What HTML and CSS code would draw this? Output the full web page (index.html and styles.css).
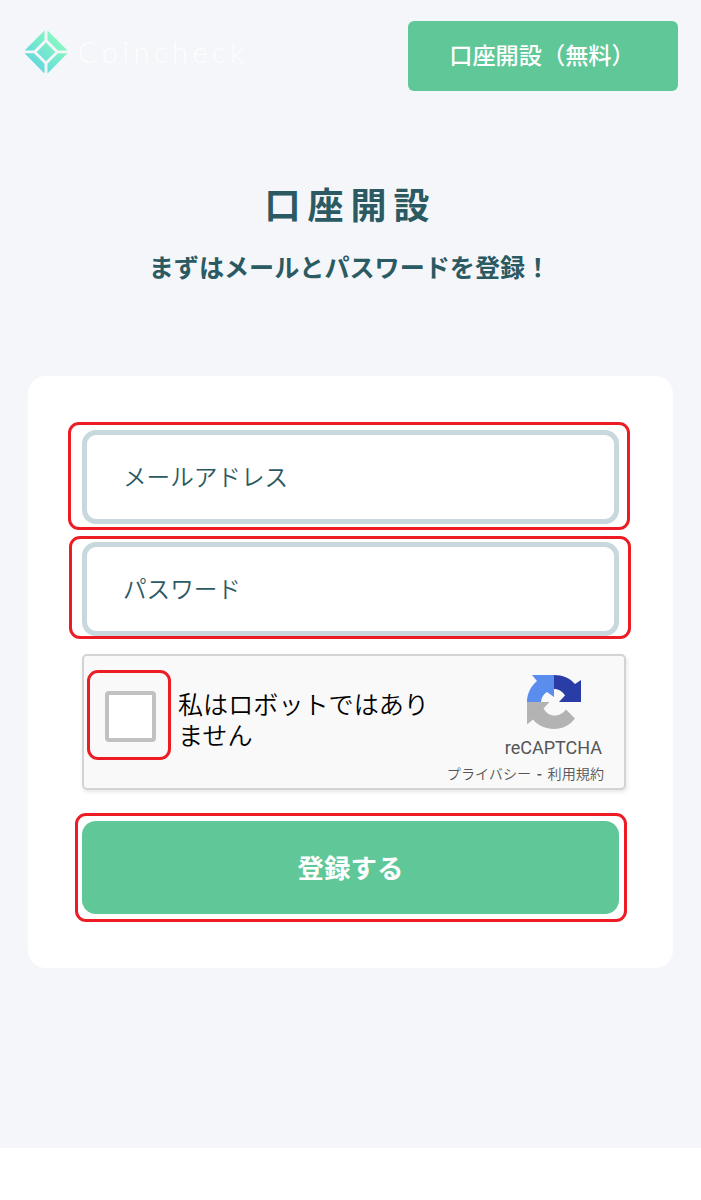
FILE: index.html
```
<!DOCTYPE html>
<html lang="ja">
  <head>
    <meta charset="UTF-8">
    <title>口座開設 | Coincheck</title>
    <link rel="stylesheet" href="styles.css">
  </head>
  <body>
    <div class="page">
      <header class="header">
        <a class="logo">
          <svg class="logo-mark" viewBox="0 0 44 44">
            <defs>
              <linearGradient id="mint" gradientUnits="userSpaceOnUse" x1="10" y1="34" x2="34" y2="10">
                <stop offset="0" stop-color="#65d9dc" />
                <stop offset="1" stop-color="#86f7c1" />
              </linearGradient>
            </defs>
            <g fill="url(#mint)">
              <path d="M20.5 .5V10L10 20.4H.5z" />
              <path d="M23.5 .5V10L34 20.4H43.5z" />
              <path d="M.5 23.3H10L20.5 33.8V43.5z" />
              <path d="M43.5 23.3H34L23.5 33.8V43.5z" />
              <path d="M22 12.4L31.3 21.9L22 31.3L12.7 21.9z" />
            </g>
          </svg>
          <span class="logo-text">Coincheck</span>
        </a>
        <a class="open-btn">口座開設（無料）</a>
      </header>

      <h1>口座開設</h1>
      <p class="lead">まずはメールとパスワードを登録！</p>

      <form class="card">
        <div class="field mark mark-email">
          <input type="text" class="input-item" placeholder="メールアドレス">
        </div>
        <div class="field mark mark-password">
          <input type="password" class="input-item" placeholder="パスワード">
        </div>

        <div class="captcha">
          <div class="check mark mark-check"></div>
          <div class="captcha-label">私はロボットではありません</div>
          <div class="captcha-brand">
            <svg class="captcha-icon" viewBox="0 0 54 54">
              <path fill="#5b8def" d="M0 27C0 18.5 4 11 10 6L5 0H27V22L20 17C16.500 19 14.500 22 14 27z" />
              <path fill="#2a3ca5" d="M27 0C35.5 0 43 3 48 9L54 5V27H32L38 20.500C35.500 16.500 32 14 27 14z" />
              <path fill="#b3b3b3" d="M0 27H22.500L16.500 33.500C19 38 23 40.500 27.500 40.500C33 40.500 36 38 39 34.500L48 43.500C43 50 35.500 54 27 54C18.500 54 11 50.500 6 44.500L0 49.500z" />
            </svg>
            <div class="captcha-name">reCAPTCHA</div>
            <div class="captcha-links">プライバシー <b>-</b> 利用規約</div>
          </div>
        </div>

        <div class="submit mark mark-submit">
          <button type="button" class="submit-btn">登録する</button>
        </div>
      </form>
    </div>
  </body>
</html>
```
FILE: styles.css
```
* {
  box-sizing: border-box;
}

body {
  margin: 0;
  background: #fff;
  font-family: "Noto Sans CJK JP", sans-serif;
  color: #2b5a62;
}

.page {
  height: 1148px;
  background: #f4f6fa;
}

.header {
  display: flex;
  justify-content: space-between;
  align-items: flex-start;
  height: 91px;
  padding: 21px 23px 0 24px;
}

.logo {
  display: flex;
  align-items: center;
  height: 44px;
  margin-top: 8.5px;
}

.logo-mark {
  width: 44px;
  height: 44px;
}

.logo-text {
  margin-left: 10px;
  font-family: Lato, sans-serif;
  font-size: 29px;
  font-weight: 300;
  line-height: 44px;
  letter-spacing: 4.5px;
  color: #fdfefe;
}

.open-btn {
  width: 270px;
  height: 70px;
  padding-right: 2px;
  border-radius: 6px;
  background: #60c798;
  color: #fff;
  font-size: 23.2px;
  font-weight: 500;
  line-height: 67px;
  text-align: center;
}

h1 {
  margin: 85px 0 0;
  font-size: 36px;
  font-weight: 700;
  line-height: 54px;
  letter-spacing: 7px;
  text-align: center;
}

.lead {
  margin: 18px 0 0;
  padding-right: 2px;
  font-size: 25.1px;
  font-weight: 700;
  line-height: 36px;
  text-align: center;
}

.card {
  width: 645px;
  height: 592px;
  margin: 92px 28px 0;
  padding: 54px 47px 0 54px;
  border-radius: 18px;
  background: #fff;
}

.field {
  width: 537px;
  margin-bottom: 18px;
}

.input-item {
  display: block;
  width: 100%;
  height: 94px;
  padding: 0 36px 3px;
  border: 5.5px solid #c7d9dc;
  border-radius: 14px;
  background: #fff;
  font-family: inherit;
  font-size: 23.6px;
  font-weight: 350;
  outline: none;
}

.input-item::placeholder {
  color: #2b5a62;
  opacity: 1;
}

/* red frames around the steps to fill in */
.mark {
  position: relative;
}

.mark::after {
  content: "";
  position: absolute;
  border: 3px solid #ed1c24;
  border-radius: 11px;
  pointer-events: none;
}

.mark-email::after {
  inset: -8px -11px -6px -14px;
}

.mark-password::after {
  inset: -6px -12px -3px -13px;
}

.captcha {
  display: flex;
  width: 544px;
  height: 136px;
  border: 2px solid #d3d3d3;
  border-radius: 5px;
  background: #f9f9f9;
  box-shadow: 1px 2px 4px rgba(0, 0, 0, 0.1);
}

.check {
  flex: none;
  width: 51px;
  height: 51px;
  margin: 35px 0 0 21px;
  border: 4px solid #c1c1c1;
  border-radius: 4px;
  background: #fff;
}

.mark-check::after {
  inset: -25px -19px -22px -22px;
}

.captcha-label {
  flex: none;
  width: 255px;
  margin: 32px 0 0 22px;
  color: #000;
  font-size: 25.1px;
  font-weight: 350;
  line-height: 30.5px;
}

.captcha-brand {
  display: flex;
  flex-direction: column;
  align-items: flex-end;
  flex: 1;
  padding: 19px 22px 0 0;
  color: #555;
}

.captcha-icon {
  width: 54px;
  height: 54px;
  margin-right: 21px;
}

.captcha-name {
  margin-top: 8px;
  font-family: Roboto, sans-serif;
  font-size: 18px;
  line-height: 22px;
}

.captcha-links {
  margin: 4px -2px 0 0;
  font-size: 14.1px;
  font-weight: 350;
  line-height: 20px;
  word-spacing: 2.5px;
  white-space: nowrap;
}

.submit {
  width: 537px;
  margin-top: 31px;
}

.submit-btn {
  display: block;
  width: 100%;
  height: 93px;
  padding: 0 0 2px;
  border: none;
  border-radius: 14px;
  background: #60c798;
  color: #fff;
  font-family: inherit;
  font-size: 26.5px;
  font-weight: 700;
}

.mark-submit::after {
  inset: -8px -8px -8px -7px;
}
```
